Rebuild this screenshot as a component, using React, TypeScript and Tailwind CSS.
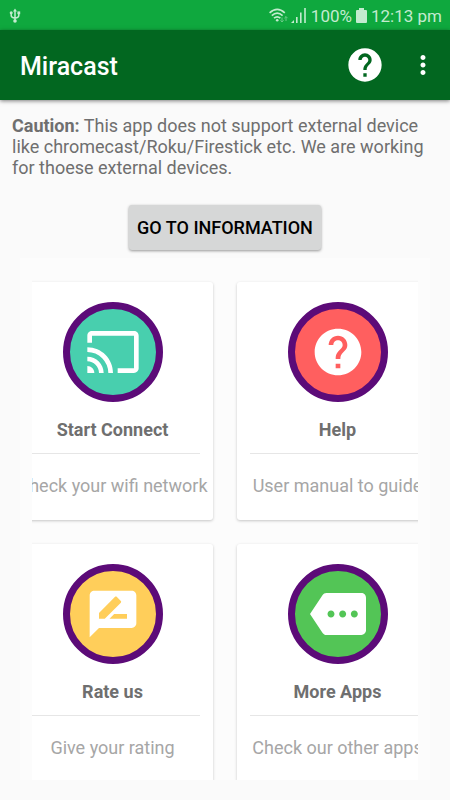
import type { ReactNode } from "react";
import {
  MdCast,
  MdHelp,
  MdMore,
  MdMoreVert,
  MdRateReview,
} from "react-icons/md";

interface MenuCardProps {
  title: string;
  subtitle: string;
  color: string;
  icon: ReactNode;
}

const menuItems: MenuCardProps[] = [
  {
    title: "Start Connect",
    subtitle: "Check your wifi network",
    color: "bg-[#48cfae]",
    icon: <MdCast size={56} />,
  },
  {
    title: "Help",
    subtitle: "User manual to guide",
    color: "bg-[#ff5f5f]",
    icon: <MdHelp size={56} />,
  },
  {
    title: "Rate us",
    subtitle: "Give your rating",
    color: "bg-[#ffce5a]",
    icon: <MdRateReview size={56} />,
  },
  {
    title: "More Apps",
    subtitle: "Check our other apps",
    color: "bg-[#53c556]",
    icon: <MdMore size={56} />,
  },
];

const UsbIcon = () => (
  <svg width="12" height="16" viewBox="0 0 12 16" fill="none">
    <path
      d="M6 2v11M2.2 5v2.5q0 2.2 3.8 2.5M9.8 5v2.5q0 2.2-3.8 2.5"
      stroke="currentColor"
      strokeWidth="1.5"
    />
    <path d="M6 .6l2 3H4z" fill="currentColor" />
    <circle cx="2.2" cy="4.8" r="1.5" fill="currentColor" />
    <rect x="8.4" y="3.4" width="2.8" height="2.8" fill="currentColor" />
    <circle cx="6" cy="13" r="1.8" fill="currentColor" />
  </svg>
);

const WifiIcon = () => (
  <svg width="20" height="16" viewBox="0 0 20 16" fill="none">
    <g stroke="currentColor" strokeWidth="1.6">
      <path d="M.6 4.8q7.6-7 15.2 0" />
      <path d="M2.8 7.6q5.4-5 10.8 0" />
      <path d="M5 10.2q3.2-2.8 6.4 0" />
    </g>
    <circle cx="8.2" cy="12.2" r="1.3" fill="currentColor" />
    <g stroke="currentColor" strokeWidth="1" opacity=".5">
      <path d="M13 9.5v4.5M11.4 12.4l1.6 1.6 1.6-1.6" />
      <path d="M17 13V8.5M15.4 10.2L17 8.6l1.6 1.6" />
    </g>
  </svg>
);

const SignalIcon = () => (
  <svg width="16" height="15" viewBox="0 0 16 15" fill="currentColor">
    <path d="M0 15l3-3v3z" />
    <rect x="5" y="9" width="1.6" height="6" />
    <rect x="9" y="4.5" width="1.6" height="10.5" />
    <rect x="13.2" y="0" width="1.6" height="15" />
  </svg>
);

const BatteryIcon = () => (
  <svg width="11" height="15" viewBox="0 0 11 15" fill="currentColor">
    <path d="M3 0h5v2h2q1 0 1 1v11q0 1-1 1H1q-1 0-1-1V3q0-1 1-1h2z" />
  </svg>
);

const StatusBar = () => (
  <div className="flex h-[30px] items-center justify-between bg-[#0fa83e] pt-0.5 pr-2 pl-[9px] text-[#c3ebcf]">
    <UsbIcon />
    <div className="flex items-center text-[17px] leading-5">
      <WifiIcon />
      <span className="ml-0.5">
        <SignalIcon />
      </span>
      <span className="ml-1">100%</span>
      <span className="mx-1">
        <BatteryIcon />
      </span>
      <span>12:13 pm</span>
    </div>
  </div>
);

const AppBar = () => (
  <header className="relative flex h-[70px] items-center bg-[#026720] pr-3 pl-5 text-white shadow-[0_1px_4px_rgba(0,0,0,0.5)]">
    <h1 className="grow pt-1 text-[25px] font-medium">Miracast</h1>
    <button aria-label="Help" className="mr-[23px]">
      <MdHelp size={40} />
    </button>
    <button aria-label="More options">
      <MdMoreVert size={30} />
    </button>
  </header>
);

const MenuCard = ({ title, subtitle, color, icon }: MenuCardProps) => (
  <button className="flex h-[238px] w-[201px] shrink-0 flex-col items-center rounded-[3px] bg-white px-[13px] pt-5 shadow-[0_1px_3px_rgba(0,0,0,0.22)]">
    <span
      className={`flex size-[100px] items-center justify-center rounded-full border-[7px] border-[#5c0b78] text-white ${color}`}
    >
      {icon}
    </span>
    <span className="mt-4 text-lg leading-6 font-bold text-[#6f6f6f]">
      {title}
    </span>
    <span className="mt-[11px] h-px w-full bg-[#e6e6e6]" />
    <span className="mt-5 text-lg leading-6 whitespace-nowrap text-[#a6a6a6]">
      {subtitle}
    </span>
  </button>
);

const App = () => {
  return (
    <div className="flex h-screen flex-col bg-[#fafafa] font-[Roboto,sans-serif]">
      <StatusBar />
      <AppBar />
      <main className="flex min-h-0 grow flex-col px-5 pb-5">
        <p className="-mx-2 pt-[15px] text-lg leading-[21px] text-[#6f6f6f]">
          <b>Caution:</b> This app does not support external device like
          chromecast/Roku/Firestick etc. We are working for thoese external
          devices.
        </p>
        <button className="mt-[27px] self-center rounded-[3px] bg-[#d6d7d7] px-2 py-3 text-lg leading-[21px] font-medium text-black shadow-[0_1px_3px_rgba(0,0,0,0.4)]">
          GO TO INFORMATION
        </button>
        <section className="mt-2 flex min-h-0 grow flex-col bg-[#fcfcfc] px-3">
          <div className="flex min-h-0 grow justify-center overflow-hidden">
            <div className="grid shrink-0 grid-cols-[auto_auto] content-start gap-6 pt-6">
              {menuItems.map((item) => (
                <MenuCard key={item.title} {...item} />
              ))}
            </div>
          </div>
        </section>
      </main>
    </div>
  );
};

export default App;
